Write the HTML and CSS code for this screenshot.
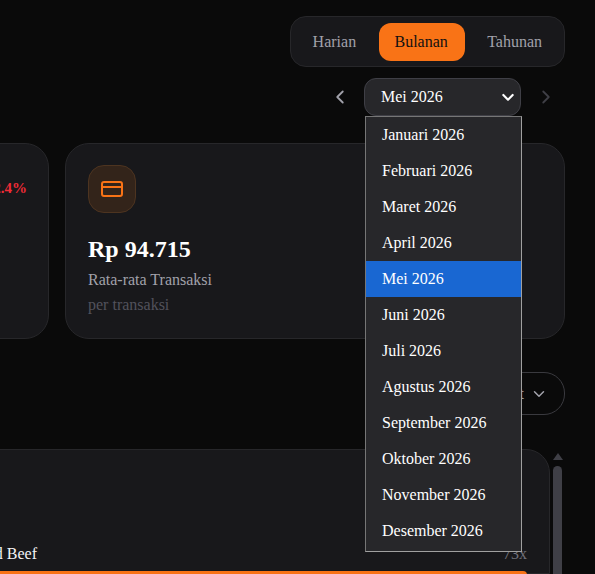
FILE: index.html
```html
<!DOCTYPE html>
<html lang="id">
<head>
  <meta charset="UTF-8" />
  <title>Laporan Penjualan</title>
  <link rel="stylesheet" href="styles.css">
</head>
<body>
  <div class="page">

    <!-- periode -->
    <div class="toolbar">
      <div class="segment">
        <button class="seg-btn first">Harian</button>
        <button class="seg-btn active">Bulanan</button>
        <button class="seg-btn">Tahunan</button>
      </div>

      <div class="month-row">
        <svg class="nav-icon" viewBox="0 0 24 24"><path d="M15 18l-6-6 6-6"/></svg>
        <div class="month-select">
          <span>Mei 2026</span>
          <svg class="select-arrow" viewBox="0 0 24 24"><path d="M5 9l7 7 7-7"/></svg>
          <ul class="month-list">
            <li>Januari 2026</li>
            <li>Februari 2026</li>
            <li>Maret 2026</li>
            <li>April 2026</li>
            <li class="selected">Mei 2026</li>
            <li>Juni 2026</li>
            <li>Juli 2026</li>
            <li>Agustus 2026</li>
            <li>September 2026</li>
            <li>Oktober 2026</li>
            <li>November 2026</li>
            <li>Desember 2026</li>
          </ul>
        </div>
        <svg class="nav-icon disabled" viewBox="0 0 24 24"><path d="M9 18l6-6-6-6"/></svg>
      </div>
    </div>

    <!-- kartu statistik -->
    <div class="cards">
      <div class="card">
        <div class="card-head">
          <span class="trend">12.4%</span>
        </div>
      </div>
      <div class="card">
        <div class="icon-box">
          <svg viewBox="0 0 24 24"><rect x="2" y="5" width="20" height="14" rx="2"/><path d="M2 10h20"/></svg>
        </div>
        <div class="card-value">Rp 94.715</div>
        <div class="card-label">Rata-rata Transaksi</div>
        <div class="card-note">per transaksi</div>
      </div>
    </div>

    <div class="filter-row">
      <button class="filter-pill">
        <span>Semua Outlet</span>
        <svg viewBox="0 0 24 24"><path d="M6 9l6 6 6-6"/></svg>
      </button>
    </div>

    <!-- produk terlaris -->
    <div class="list-row">
      <div class="panel">
        <div class="product-head">
          <span class="product-name">Smoked Beef</span>
          <span class="product-count">73x</span>
        </div>
        <div class="product-bar"></div>
      </div>
      <div class="scrollbar">
        <div class="scroll-up"></div>
        <div class="scroll-thumb"></div>
      </div>
    </div>

  </div>
</body>
</html>
```

FILE: styles.css
```css
* { box-sizing: border-box; }
html, body { margin: 0; height: 100%; overflow: hidden; }
body { background: #0a0a0a; color: #fff; font-family: "Liberation Serif", serif; }
button { font-family: inherit; }

.page { display: flex; flex-direction: column; align-items: flex-end; height: 574px; padding: 16px 30px 0 0; overflow: hidden; }

.toolbar { display: flex; flex-direction: column; align-items: flex-end; gap: 11px; }
.segment { display: flex; gap: 6px; height: 51px; padding: 6px; align-items: center; background: #18181b; border: 1px solid #27272a; border-radius: 16px; }
.seg-btn { height: 38px; padding: 0 16px; font-size: 16px; color: #a1a1aa; background: none; border: 0; border-radius: 12px; }
.seg-btn.first { margin-right: 1px; }
.seg-btn.active { width: 86px; padding: 0 2px 0 0; color: #111; background: #f97316; }

.month-row { display: flex; align-items: center; height: 38px; }
.nav-icon { width: 22px; height: 22px; margin: 0 13px; fill: none; stroke: #a1a1aa; stroke-width: 2; stroke-linecap: round; stroke-linejoin: round; }
.nav-icon.disabled { margin-right: 8px; margin-left: 14px; stroke: #3f3f46; }
.nav-icon:first-child { margin-left: 0; }

.month-select { position: relative; display: flex; align-items: center; justify-content: space-between; width: 157px; height: 38px; padding: 0 4px 0 16px; font-size: 16px; background: #27272a; border: 1px solid #3f3f46; border-radius: 12px; }
.select-arrow { width: 16px; height: 16px; fill: none; stroke: #fff; stroke-width: 3.2; stroke-linecap: round; stroke-linejoin: round; }
.month-list { position: absolute; top: 37px; left: 0; z-index: 5; width: 157px; margin: 0; padding: 0 0 2px; list-style: none; background: #27272a; border: 1px solid #a0a0a0; border-left-color: #767676; border-top-color: #767676; }
.month-list li { height: 36px; padding-left: 16px; line-height: 36px; }
.month-list .selected { background: #1967d2; }

.cards { display: flex; flex: none; justify-content: flex-end; gap: 16px; margin-top: 27px; }
.card { flex: none; width: 500px; height: 196px; padding: 21px 22px; background: #18181b; border: 1px solid #27272a; border-radius: 24px; }
.card-head { display: flex; justify-content: flex-end; height: 48px; }
.trend { margin: 15px -1px 0 0; font-size: 15px; font-weight: 700; color: #ef2b36; }
.icon-box { display: flex; align-items: center; justify-content: center; width: 48px; height: 48px; background: #33241a; border: 1px solid #4d3420; border-radius: 16px; }
.icon-box svg { width: 24px; height: 24px; fill: none; stroke: #f97316; stroke-width: 2; stroke-linecap: round; stroke-linejoin: round; }
.card-value { margin-top: 21px; font-size: 24px; font-weight: 700; line-height: 30px; }
.card-label { margin-top: 7px; font-size: 16px; line-height: 18px; color: #a1a1aa; }
.card-note { margin-top: 7px; font-size: 16px; line-height: 18px; color: #52525b; }

.filter-row { display: flex; flex: none; justify-content: flex-end; margin-top: 33px; }
.filter-pill { display: flex; align-items: center; justify-content: flex-end; gap: 6px; width: 120px; height: 43px; padding: 0 16px; font-size: 16px; color: #a1a1aa; background: none; border: 1px solid #3a3a3f; border-radius: 21px; white-space: nowrap; overflow: hidden; }
.filter-pill svg { flex: none; width: 18px; height: 18px; fill: none; stroke: #a1a1aa; stroke-width: 2; stroke-linecap: round; stroke-linejoin: round; }

.list-row { display: flex; flex: none; justify-content: flex-end; gap: 3px; margin-top: 34px; height: 125px; }
.panel { flex: none; width: 700px; padding: 95px 22px 0 0; background: #18181b; border: 1px solid #27272a; border-radius: 24px 24px 0 0; }
.product-head { display: flex; justify-content: flex-end; font-size: 16px; line-height: 18px; }
.product-name { margin-right: 466px; color: #f4f4f5; }
.product-count { color: #71717a; }
.product-bar { height: 8px; margin-top: 8px; background: #f97316; border-radius: 4px; }

.scrollbar { flex: none; display: flex; flex-direction: column; align-items: center; gap: 6px; width: 9px; margin-right: 3px; }
.scroll-up { width: 0; height: 0; margin-top: 4px; border-left: 5px solid transparent; border-right: 5px solid transparent; border-bottom: 7px solid #3f3f46; }
.scroll-thumb { width: 9px; flex: 1; background: #3f3f46; border-radius: 5px 5px 0 0; }
```
